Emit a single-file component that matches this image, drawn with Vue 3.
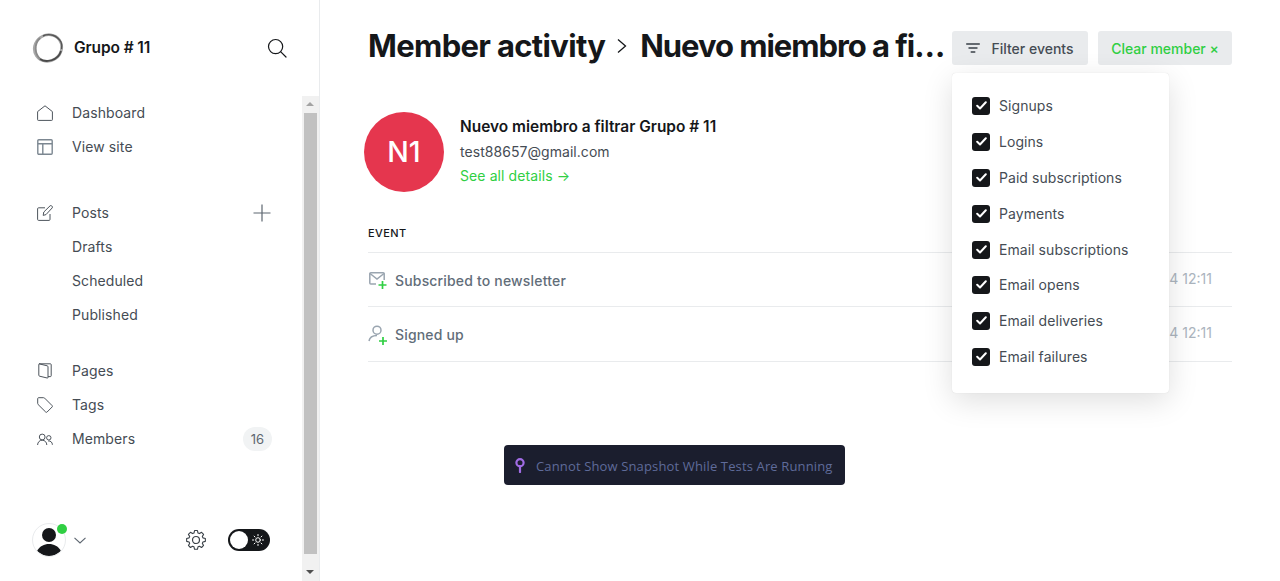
<script setup>
const filters = ['Signups','Logins','Paid subscriptions','Payments','Email subscriptions','Email opens','Email deliveries','Email failures']
</script>

<template>
  <div class="app">
    <aside class="sidebar">
      <header class="brand">
        <svg class="logo" width="32" height="32" viewBox="0 0 32 32" fill="none">
          <ellipse cx="16" cy="16" rx="14" ry="13" stroke="#a8a8a8" stroke-width="2.800" transform="rotate(-35 16 16)"/>
          <path d="M8 27C3 22 1.500 12 8 6" stroke="#8a8a8a" stroke-width="1.800"/>
          <path d="M8 27C14 31 26 29 29 19" stroke="#4a4a4a" stroke-width="1.800"/>
          <path d="M11 4C17 1 25 3 29 10c1 2 1 5 .5 7" stroke="#555" stroke-width="1.400"/>
        </svg>
        <span class="brand-name">Grupo # 11</span>
        <svg class="search" width="20" height="20" viewBox="0 0 20 20" fill="none" stroke="#15171a" stroke-width="1.200" stroke-linecap="round">
          <circle cx="8.600" cy="8.600" r="7.100"/><path d="M13.800 13.800 19 19"/>
        </svg>
      </header>
      <div class="side-scroll">
        <nav class="nav">
          <ul class="group g1">
            <li class="item">
              <svg class="ic" viewBox="0 0 16 16" fill="none"><path d="M.6 6.600 8 .8l7.400 5.800v8.100a.7.7 0 0 1-.7.7H1.300a.7.7 0 0 1-.7-.7z"/></svg>
              <span>Dashboard</span>
            </li>
            <li class="item">
              <svg class="ic soft" viewBox="0 0 16 16" fill="none"><rect x=".8" y=".8" width="14.400" height="14.400" rx="1"/><path d="M.8 4.800h14.400M5.800 4.800v10.400"/></svg>
              <span>View site</span>
            </li>
          </ul>
          <ul class="group g2">
            <li class="item">
              <svg class="ic" viewBox="0 0 16 16" fill="none"><path d="M8 2.800H1.600a1 1 0 0 0-1 1v10.600a1 1 0 0 0 1 1h10.400a1 1 0 0 0 1-1V9"/><path d="M6.200 10.400 6.800 7 13 .9a1.200 1.200 0 0 1 1.700 0l.4.4a1.200 1.200 0 0 1 0 1.700L9 9.600z"/></svg>
              <span>Posts</span>
              <svg class="plus" width="18" height="18" viewBox="0 0 18 18" stroke="#5d6670" stroke-width="1.200"><path d="M9 .5v17M.5 9h17"/></svg>
            </li>
            <li class="item sub">Drafts</li>
            <li class="item sub">Scheduled</li>
            <li class="item sub">Published</li>
          </ul>
          <ul class="group">
            <li class="item">
              <svg class="ic" viewBox="0 0 16 16" fill="none"><path d="M2 .8h11.400a.8.8 0 0 1 .8.8v11.200a.8.8 0 0 1-.8.8H11"/><path d="M2 .8l8.200 2a1 1 0 0 1 .8 1v10.600a.6.6 0 0 1-.8.6l-7.600-1.800a1 1 0 0 1-.8-1V1.600A.8.8 0 0 1 2 .8z"/></svg>
              <span>Pages</span>
            </li>
            <li class="item">
              <svg class="ic" viewBox="0 0 16 16" fill="none"><path d="M1.600.7h5a1.400 1.400 0 0 1 1 .4l7.500 7.500a1 1 0 0 1 0 1.400l-5 5a1 1 0 0 1-1.400 0L1.100 7.500a1.400 1.400 0 0 1-.4-1v-5a.9.9 0 0 1 .9-.8z"/></svg>
              <span>Tags</span>
            </li>
            <li class="item">
              <svg class="ic" viewBox="0 0 16 16" fill="none"><circle cx="5.200" cy="6" r="2.900"/><path d="M.6 14c0-2.800 2-4.800 4.600-4.800S9.800 11.200 9.800 14"/><circle cx="11.800" cy="6.800" r="2.200"/><path d="M11.200 10c2.400-.4 4.200 1.400 4.200 3.800"/></svg>
              <span>Members</span>
              <span class="count">16</span>
            </li>
          </ul>
        </nav>
        <div class="scrollbar">
          <span class="arrow up"></span>
          <span class="thumb"></span>
          <span class="arrow down"></span>
        </div>
      </div>
      <footer class="foot">
        <div class="avatar">
          <svg width="32" height="32" viewBox="0 0 32 32" fill="#15171a">
            <circle cx="16" cy="11" r="7"/><path d="M4 27c3-5 7-7 12-7s9 2 12 7c-3 3-7 5-12 5s-9-2-12-5z"/>
          </svg>
          <span class="dot"></span>
        </div>
        <svg class="chev" width="12" height="7" viewBox="0 0 12 7" fill="none" stroke="#5d6670" stroke-width="1.100"><path d="M.5.800 6 6l5.500-5.200"/></svg>
        <svg class="gear" width="22" height="22" viewBox="0 0 24 24" fill="none" stroke="#394047" stroke-width="1.300" stroke-linejoin="round">
          <circle cx="12" cy="12" r="3.800"/>
          <path d="M10.300 2.200h3.400l.7 2.900 1.700.7 2.500-1.500 2.400 2.400-1.500 2.500.7 1.700 2.900.7v3.400l-2.900.7-.7 1.700 1.500 2.500-2.400 2.400-2.500-1.500-1.700.7-.7 2.900h-3.400l-.7-2.900-1.700-.7-2.500 1.500-2.400-2.400 1.500-2.500-.7-1.700-2.900-.7v-3.400l2.900-.7.7-1.700-1.500-2.500 2.400-2.400 2.500 1.500 1.700-.7z" transform="translate(12 12) scale(.92) translate(-12 -13.400)"/>
        </svg>
        <div class="toggle">
          <span class="knob"></span>
          <svg width="12" height="12" viewBox="0 0 12 12" fill="none" stroke="#fff" stroke-width="1" stroke-linecap="round"><circle cx="6" cy="6" r="2.300"/><path d="M6 .5v1.200M6 10.300v1.200M.5 6h1.200M10.300 6h1.200M2.100 2.100l.9.900M9 9l.9.900M2.100 9.900l.9-.9M9 3l.9-.9"/></svg>
        </div>
      </footer>
    </aside>

    <main class="main">
      <header class="top">
        <h1 class="title">
          <span>Member activity</span>
          <svg width="10" height="16" viewBox="0 0 10 16" fill="none" stroke="#15171a" stroke-width="1.300"><path d="M1 1.500 8.500 8 1 14.500"/></svg>
          <span class="ellipsis">Nuevo miembro a filtrar Grupo # 11</span>
        </h1>
        <div class="actions">
          <div class="filter-wrap">
            <button class="btn">
              <svg width="14" height="10" viewBox="0 0 14 10" stroke="#394047" stroke-width="1.400" stroke-linecap="round"><path d="M.7 1h12.600M3 5h8M5.200 9h3.600"/></svg>
              Filter events
            </button>
            <div class="menu">
              <label v-for="f in filters" :key="f" class="opt">
                <span class="box">
                  <svg width="11" height="9" viewBox="0 0 11 9" fill="none" stroke="#fff" stroke-width="2" stroke-linecap="round" stroke-linejoin="round"><path d="M1.200 4.800 4 7.500l5.800-6.200"/></svg>
                </span>
                {{ f }}
              </label>
            </div>
          </div>
          <button class="btn clear">Clear member ×</button>
        </div>
      </header>

      <section class="member">
        <div class="initials">N1</div>
        <div class="info">
          <div class="name">Nuevo miembro a filtrar Grupo # 11</div>
          <div class="email">test88657@gmail.com</div>
          <a class="details">See all details →</a>
        </div>
      </section>

      <div class="table">
        <div class="thead">EVENT</div>
        <div class="row">
          <svg class="ev" width="20" height="20" viewBox="0 0 20 20" fill="none">
            <path d="M8 13H2.800a1 1 0 0 1-1-1V2.800a1 1 0 0 1 1-1h12.400a1 1 0 0 1 1 1V9" stroke="#9aa5b0" stroke-width="1.500"/>
            <path d="M2 2.500 9 8l7-5.500" stroke="#9aa5b0" stroke-width="1.500"/>
            <path d="M14.500 10v8M10.500 14h8" stroke="#30cf43" stroke-width="1.700"/>
          </svg>
          <span class="ev-text">Subscribed to newsletter</span>
          <span class="when">4 12:11</span>
        </div>
        <div class="row">
          <svg class="ev" width="20" height="20" viewBox="0 0 20 20" fill="none">
            <circle cx="9" cy="5.200" r="4" stroke="#9aa5b0" stroke-width="1.500"/>
            <path d="M1 16c.6-3.500 3.500-5.500 8-5.500" stroke="#9aa5b0" stroke-width="1.500"/>
            <path d="M15 12v8M11 16h8" stroke="#30cf43" stroke-width="1.700"/>
          </svg>
          <span class="ev-text">Signed up</span>
          <span class="when">4 12:11</span>
        </div>
      </div>

      <div class="toast">
        <svg width="10" height="15" viewBox="0 0 10 15" fill="none" stroke="#a06ce4" stroke-width="2.200"><circle cx="5" cy="4.800" r="3.600"/><path d="M5 8v6" stroke-linecap="round"/></svg>
        <span>Cannot Show Snapshot While Tests Are Running</span>
      </div>
    </main>
  </div>
</template>

<style>
html, body { margin: 0; height: 100%; overflow: hidden; background: #fff; }
</style>

<style scoped>
.app {
  display: flex;
  height: 581px;
  font-family: Inter, "Liberation Sans", sans-serif;
  color: #15171a;
  overflow: hidden;
}
.sidebar {
  box-sizing: border-box;
  width: 320px;
  flex: none;
  display: flex;
  flex-direction: column;
  border-right: 1px solid #e9ebed;
  position: relative;
}
.brand {
  box-sizing: border-box;
  height: 96px;
  flex: none;
  display: flex;
  align-items: center;
  padding: 0 32px;
}
.brand-name { font-size: 15.500px; font-weight: 600; margin-left: 10px; margin-bottom: 1px; letter-spacing: -.1px; }
.search { margin-left: auto; }
.side-scroll { flex: 1; display: flex; min-height: 0; }
.nav { flex: 1; padding-left: 37px; padding-right: 30px; }
.group { list-style: none; margin: 0; padding: 0; }
.g1 { margin-bottom: 32px; }
.g2 { margin-bottom: 22px; }
.item {
  box-sizing: border-box;
  display: flex;
  align-items: center;
  height: 34px;
  font-size: 14px;
  letter-spacing: .1px;
  color: #454c54;
}
.item > span:first-of-type { line-height: 34px; }
.ic { width: 16px; height: 16px; margin-right: 19px; flex: none; stroke: #4d545c; stroke-width: 1; stroke-linejoin: round; }
.soft { stroke: #7c8791; stroke-width: 1.400; }
.sub { padding-left: 35px; padding-bottom: 2px; }
.plus { margin-left: auto; margin-right: 1px; }
.count {
  margin-left: auto;
  background: #f1f3f4;
  border-radius: 12px;
  font-size: 13px;
  height: 24px;
  line-height: 24px;
  width: 29px;
  text-align: center;
  color: #5d6670;
}
.scrollbar {
  box-sizing: border-box;
  width: 17px;
  flex: none;
  background: #f1f1f1;
  display: flex;
  flex-direction: column;
  align-items: center;
}
.thumb { width: 13px; height: 441px; flex: none; background: #c1c1c1; margin-bottom: auto; }
.arrow { height: 17px; flex: none; position: relative; width: 100%; }
.arrow::after {
  content: "";
  position: absolute;
  left: 4px;
  border-left: 4px solid transparent;
  border-right: 4px solid transparent;
}
.up::after { top: 6px; border-bottom: 4px solid #a3a3a3; }
.down::after { top: 6px; border-top: 4px solid #505050; }
.foot {
  box-sizing: border-box;
  display: flex;
  align-items: center;
  padding: 0 49px 0 32px;
  position: absolute;
  left: 0;
  right: 0;
  bottom: 0;
  height: 82px;
}
.avatar {
  box-sizing: border-box;
  width: 34px;
  height: 34px;
  border-radius: 50%;
  border: 1px solid #e9ebed;
  position: relative;
  overflow: visible;
  flex: none;
}
.avatar svg { display: block; border-radius: 50%; }
.dot {
  position: absolute;
  top: 0;
  right: -2px;
  width: 10px;
  height: 10px;
  border-radius: 50%;
  background: #30cf43;
}
.chev { margin-left: 8px; }
.gear { margin-left: auto; margin-right: 21px; }
.toggle {
  box-sizing: border-box;
  width: 42px;
  height: 22px;
  border-radius: 11px;
  background: #15171a;
  display: flex;
  align-items: center;
  padding: 0 6px 0 2px;
  justify-content: space-between;
}
.knob { width: 18px; height: 18px; border-radius: 50%; background: #fff; }
.main {
  flex: 1;
  min-width: 0;
  position: relative;
  padding: 0 48px;
}
.top {
  display: flex;
  align-items: center;
  height: 34px;
  padding-top: 31px;
}
.title {
  margin: 0 0 4px;
  flex: 1;
  min-width: 0;
  display: flex;
  align-items: center;
  gap: 12px;
  font-size: 31px;
  font-weight: 700;
  letter-spacing: -.67px;
  line-height: 40px;
  white-space: nowrap;
}
.title span:first-child { flex: none; }
.title svg { flex: none; }
.ellipsis { overflow: hidden; text-overflow: ellipsis; min-width: 0; padding-left: 1px; letter-spacing: -1.050px; }
.actions { display: flex; gap: 10px; flex: none; margin-left: 6px; }
.filter-wrap { position: relative; }
.btn {
  box-sizing: border-box;
  height: 34px;
  border: 0;
  border-radius: 3px;
  background: #e9ebed;
  font: 500 14px Inter, sans-serif;
  color: #454c54;
  display: flex;
  align-items: center;
  gap: 11px;
  padding: 0;
  width: 136px;
  justify-content: center;
  white-space: nowrap;
}
.clear { color: #30cf43; width: 134px; }
.menu {
  box-sizing: border-box;
  position: absolute;
  top: 42px;
  left: 0;
  width: 217px;
  height: 320px;
  padding: 14.900px 20px;
  background: #fff;
  border-radius: 4px;
  box-shadow: 0 0 1px rgba(0,0,0,.15), 0 8px 30px rgba(0,0,0,.13);
  display: flex;
  flex-direction: column;
  z-index: 5;
}
.opt {
  display: flex;
  align-items: center;
  gap: 9px;
  height: 36px;
  flex: none;
  font-size: 14px;
  letter-spacing: .06px;
  color: #454c54;
}
.opt:nth-child(6) { margin-top: -1px; }
.box {
  width: 18px;
  height: 18px;
  border-radius: 3px;
  background: #15171a;
  display: flex;
  align-items: center;
  justify-content: center;
  flex: none;
}
.member {
  display: flex;
  align-items: flex-start;
  margin: 47px 0 0 -4px;
}
.initials {
  box-sizing: border-box;
  width: 80px;
  height: 80px;
  border-radius: 50%;
  background: #e5364e;
  color: #fff;
  font-size: 28.500px;
  font-weight: 500;
  padding-bottom: 2px;
  display: flex;
  align-items: center;
  justify-content: center;
  flex: none;
}
.info { margin-left: 16px; padding-top: 4px; }
.name { font-size: 15.450px; font-weight: 600; line-height: 22px; }
.email { font-size: 14px; color: #454c54; line-height: 24px; margin-top: 2px; letter-spacing: .05px; }
.details { display: block; font-size: 14px; color: #30cf43; line-height: 24px; letter-spacing: .1px; }
.table { margin-top: 31px; }
.thead {
  font-size: 11px;
  font-weight: 500;
  letter-spacing: .4px;
  line-height: 20px;
  padding-bottom: 9px;
  border-bottom: 1px solid #e9ebed;
}
.row {
  box-sizing: border-box;
  display: flex;
  align-items: center;
  height: 54px;
  padding-top: 2px;
  border-bottom: 1px solid #e9ebed;
}
.row + .row { height: 55px; padding-top: 1px; }
.ev { flex: none; margin-right: 7px; }
.ev-text { font-size: 14px; font-weight: 500; letter-spacing: .17px; color: #626d79; }
.when { margin-left: auto; margin-right: 20px; margin-bottom: 5px; font-size: 14px; font-weight: 400; color: #abb4be; }
.toast {
  box-sizing: border-box;
  position: absolute;
  left: 184px;
  top: 445px;
  width: 341px;
  height: 40px;
  background: #1b1e2e;
  border-radius: 4px;
  display: flex;
  align-items: center;
  gap: 11px;
  padding-left: 11px;
  font-family: "Open Sans", sans-serif;
  font-size: 13px;
  letter-spacing: .14px;
  color: #5f6b9a;
  white-space: nowrap;
}
.toast span { padding-top: 1px; }
</style>
